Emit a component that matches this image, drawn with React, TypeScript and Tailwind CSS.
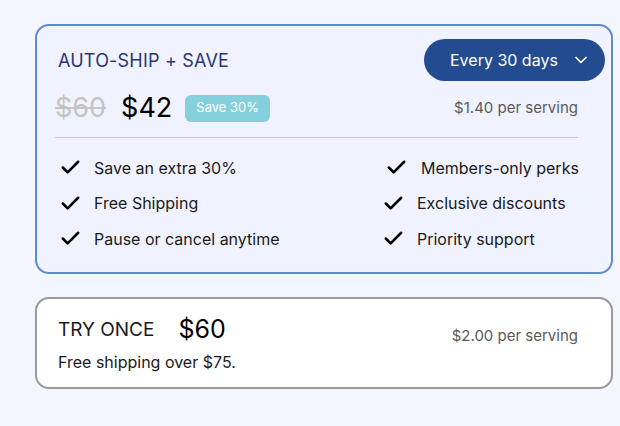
import { Check, ChevronDown } from 'lucide-react'

const leftPerks = ['Save an extra 30%', 'Free Shipping', 'Pause or cancel anytime']
const rightPerks = ['Members-only perks', 'Exclusive discounts', 'Priority support']

function Perk({ label, shift }: { label: string; shift?: boolean }) {
  return (
    <div className={`flex items-center h-[35.5px] whitespace-nowrap ${shift ? 'pl-[3px]' : ''}`}>
      <Check className="w-[23px] h-[23px] shrink-0 text-black" strokeWidth={2.7} />
      <span className={`${shift ? 'ml-[13px]' : 'ml-[12px]'} text-[16px] text-[#1a1a1a]`}>{label}</span>
    </div>
  )
}

export default function App() {
  return (
    <div className="min-h-[426px] w-[620px] bg-[#f3f6fc] pt-[24px] pl-[35px] font-['Inter',sans-serif]">
      <div className="w-[578px] h-[250px] rounded-[14px] border-2 border-[#5e8bcb] bg-[#f0f3ff] pl-[18px] pr-[33px] pt-[13px]">
        <div className="flex items-center justify-between">
          <span className="ml-[3px] text-[18px] text-[#2a3674] tracking-[0.2px]">AUTO-SHIP + SAVE</span>
          <button className="-mr-[27px] flex items-center h-[42px] w-[181px] rounded-full bg-[#234b8f] pl-[26px] pr-[14px] text-white text-[16px]">
            <span>Every 30 days</span>
            <ChevronDown className="ml-auto w-[20px] h-[20px]" strokeWidth={2} />
          </button>
        </div>
        <div className="flex items-center justify-between mt-[11px] h-[32px]">
          <div className="flex items-center">
            <span className="text-[27px] text-[#c4c4c4] line-through decoration-[1.5px]">$60</span>
            <span className="ml-[15px] text-[27px] text-black">$42</span>
            <span className="ml-[13px] flex items-center h-[27px] rounded-[6px] bg-[#86cfdc] px-[11px] text-[13px] text-white">Save 30%</span>
          </div>
          <span className="text-[15px] text-[#5a5a5a]">$1.40 per serving</span>
        </div>
        <div className="mt-[13px] h-px bg-[#c8cad6]" />
        <div className="mt-[12px] grid grid-cols-[323px_1fr] pl-[4px]">
          <div>
            {leftPerks.map((p) => (
              <Perk key={p} label={p} />
            ))}
          </div>
          <div>
            {rightPerks.map((p, i) => (
              <Perk key={p} label={p} shift={i === 0} />
            ))}
          </div>
        </div>
      </div>
      <div className="mt-[23px] w-[578px] h-[92px] rounded-[14px] border-2 border-[#9a9a9a] bg-white pl-[21px] pr-[33px] pt-[16px]">
        <div className="flex items-center justify-between h-[30px]">
          <div className="flex items-center">
            <span className="text-[19px] text-[#1a1a1a]">TRY ONCE</span>
            <span className="ml-[24px] text-[25px] text-black">$60</span>
          </div>
          <span className="mt-[12px] text-[15px] text-[#5a5a5a]">$2.00 per serving</span>
        </div>
        <div className="mt-[5px] text-[16px] text-[#1a1a1a]">Free shipping over $75.</div>
      </div>
    </div>
  )
}
